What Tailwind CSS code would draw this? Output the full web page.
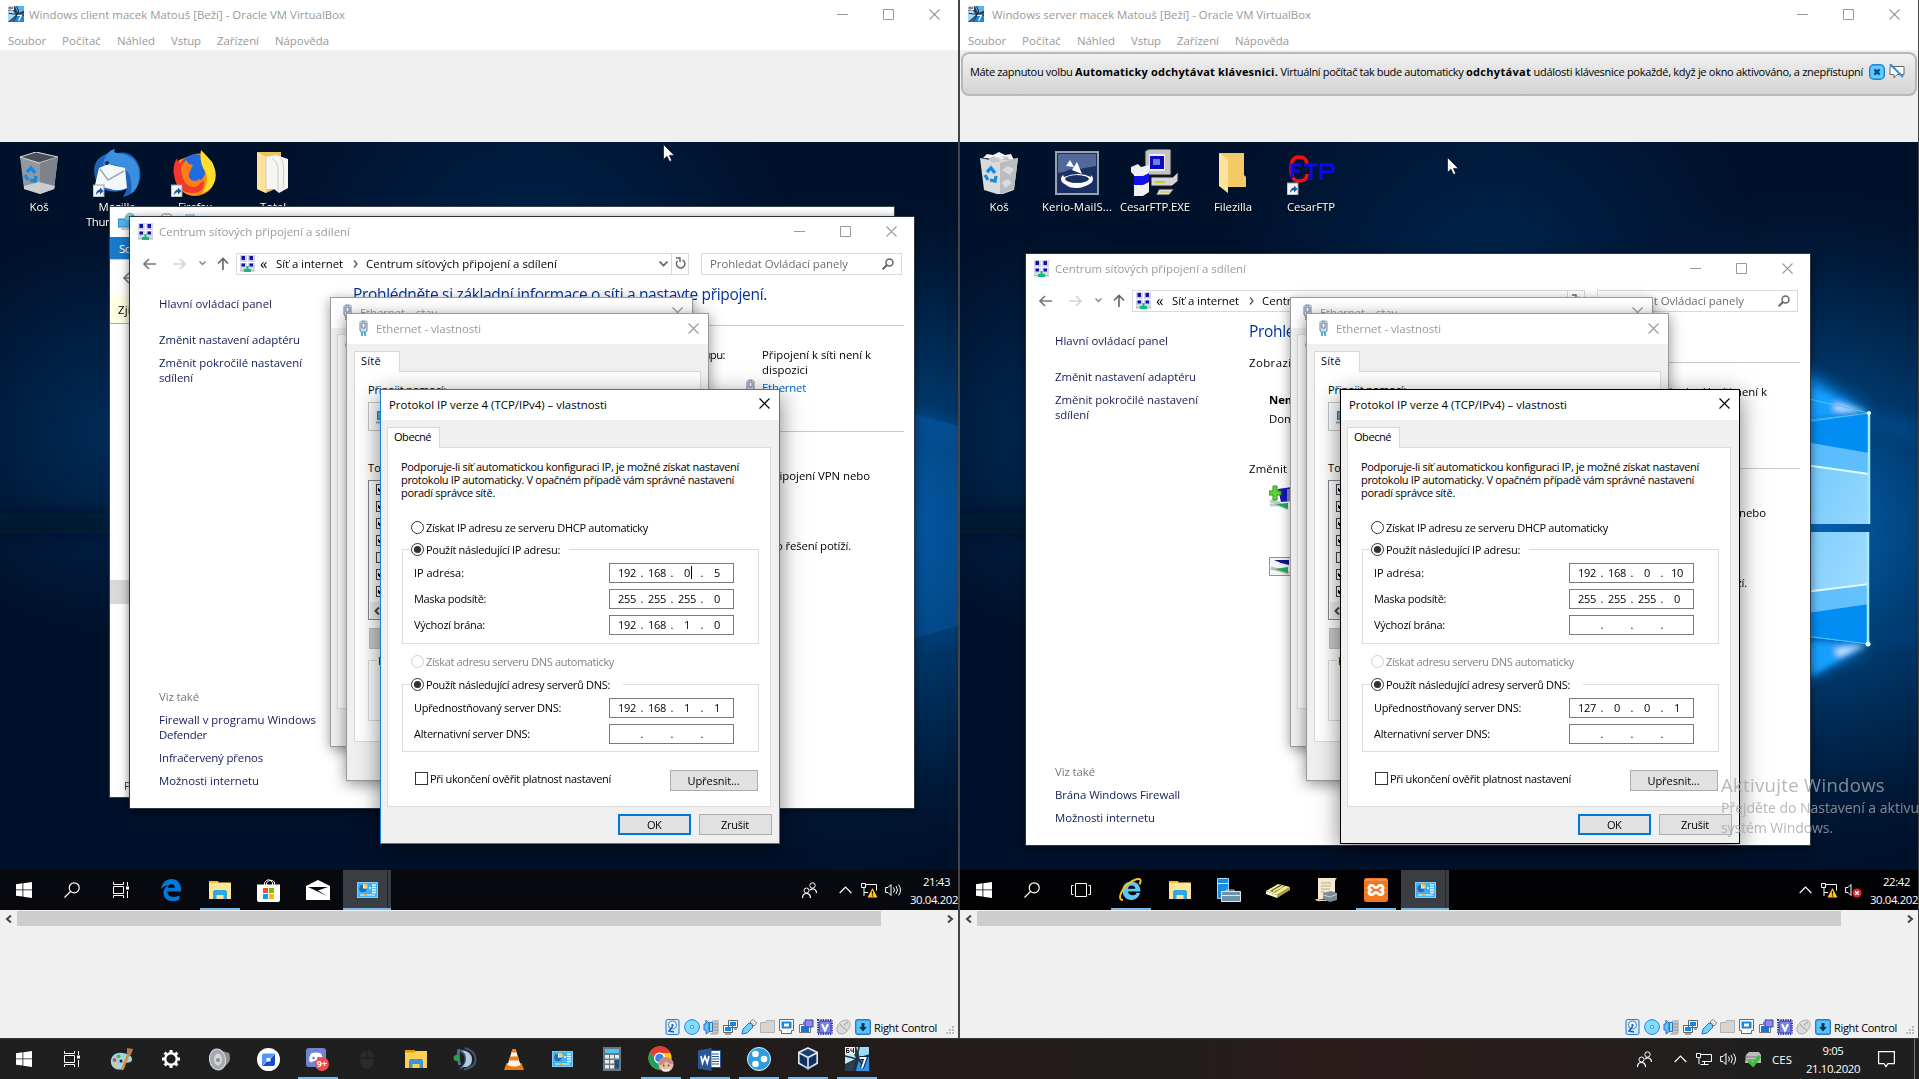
<!DOCTYPE html>
<html lang="cs">
<head>
<meta charset="utf-8">
<title>Windows client / server – Oracle VM VirtualBox</title>
<script src="https://cdn.jsdelivr.net/npm/@tailwindcss/browser@4"></script>
</head>
<body class="overflow-hidden bg-[#3a3a3c]">
<div id="root" class="flex h-[1079px] w-[1919px] flex-col overflow-hidden font-['Open_Sans','Noto_Sans',sans-serif] text-[11.4px] leading-[15px]"></div>
<script>
// Text with an optional target width; letter spacing is fitted after layout.
const t = (s, w, c = '') => `<span class="${c.includes('block') ? 'w-fit' : 'inline-block'} shrink-0 whitespace-pre ${c}"${w ? ` data-w="${w}"` : ''}>${s}</span>`;
const svg = (w, h, vb, body, c = '') => `<svg class="block shrink-0 ${c}" width="${w}" height="${h}" viewBox="${vb}" fill="none">${body}</svg>`;

const I = {
  vm: svg(16,16,'0 0 24 24','<rect width="24" height="24" fill="#2b3a4c"/><path d="M10 0h14v7l-9 4z" fill="#58b4ee"/><path d="M0 7l7-1 5 7-12 11z" fill="#a9dcf8"/><path d="M3 24l11-11 10-2v13z" fill="#1f86d8"/><path d="M13 0l3 9-8 15M1 11l23 3" stroke="#1d3144" stroke-width="1.500"/><rect width="9" height="6" fill="#eee"/><path d="M1.500 1.500h2v3h-2zM6 1v4M5 3h3" stroke="#333"/><path d="M14 14h6l-4 8" stroke="#fff" stroke-width="2"/>'),
  vmBig: svg(24,24,'0 0 24 24','<rect width="24" height="24" fill="#2a3440"/><path d="M11 0h13v9l-9 2z" fill="#9adcf8"/><path d="M0 7h9l3 4-12 6z" fill="#bfe9fb"/><path d="M0 18l12-6-3 12H0z" fill="#2c3f52"/><path d="M11 24l3-12 10-2v14z" fill="#2b93ec"/><path d="M14 0l-5 24M0 9l12 3 12-4M10 8l8 10" stroke="#1d3144" stroke-width="1.600"/><rect width="10" height="7" fill="#f4f4f4"/><path d="M4 1.500H1.500v4H4v-2H2M6 1.500v2.500h3M8.500 1v5" stroke="#222"/><path d="M14.500 11h6l-3.500 10" stroke="#123" stroke-width="4"/><path d="M14.500 11h6l-3.500 10" stroke="#fff" stroke-width="2"/>'),
  min: svg(11,11,'0 0 11 11','<path d="M0 5.500h11" stroke="currentColor"/>'),
  max: svg(11,11,'0 0 11 11','<path d="M.5.5h10v10H.5z" stroke="currentColor"/>'),
  x: svg(11,11,'0 0 11 11','<path d="M.5.5l10 10M10.500.5l-10 10" stroke="currentColor" stroke-width="1.100"/>'),
  net: svg(15,17,'0 0 15 17','<path d="M0 0h7v7H0zM8 0h7v7H8zM0 8h7v6H0zM8 8h7v6H8z" fill="#d5d5ea"/><path d="M1.500 1h3.500v4h-3.500zM9.500 1h3.500v4h-3.500zM1.500 8.500h3.500v3h-3.500zM9.500 8.500h3.500v3h-3.500z" fill="#1212a8"/><path d="M5 15.500H0M10 15.500h5" stroke="#bbb" stroke-width="2"/><path d="M6.500 11h2v3H11v3H4v-3h2.500z" fill="#16b877"/>'),
  plug: svg(9,17,'0 0 9 17','<path d="M1 2.500L2.500 1h4L8 2.500V11L6.500 12h-4L1 11z" fill="#cfdcea" stroke="#71849c"/><path d="M3 3h3v5H3z" fill="#fff" stroke="#5f7590" stroke-width=".9"/><path d="M3 12v4M6 12v4" stroke="#1aa3d8" stroke-width="1.600"/>'),
  back: svg(13,12,'0 0 13 12','<path d="M13 6H1.500M6 1L1 6l5 5" stroke="#777" stroke-width="1.600"/>'),
  fwd: svg(13,12,'0 0 13 12','<path d="M0 6h11.500M7 1l5 5-5 5" stroke="#d4d4d4" stroke-width="1.600"/>'),
  dn: svg(7,5,'0 0 7 5','<path d="M.5.5l3 3 3-3" stroke="#888" stroke-width="1.500"/>'),
  dn2: svg(9,6,'0 0 9 6','<path d="M.5.500l4 4 4-4" stroke="#666" stroke-width="1.700"/>'),
  up: svg(12,13,'0 0 12 13','<path d="M6 13V1.500M1 6.500L6 1.500l5 5" stroke="#666" stroke-width="1.600"/>'),
  ref: svg(11,13,'0 0 11 13','<path d="M7.500 3A4.200 4.200 0 1 1 2.500 4M1 1h4v4" stroke="#666" stroke-width="1.500"/>'),
  mag: svg(12,12,'0 0 12 12','<circle cx="7.500" cy="4.500" r="3.500" stroke="#666" stroke-width="1.500"/><path d="M5 7L.7 11.300" stroke="#666" stroke-width="2"/>'),
  win: svg(16,16,'0 0 16 16','<path d="M0 2.200l6.500-.9v6.200H0zM7.300 1.200L16 0v7.500H7.300zM0 8.300h6.500v6.300L0 13.700zM7.300 8.300H16V16l-8.700-1.200z" fill="#fff"/>'),
  search: svg(16,16,'0 0 16 16','<circle cx="10.200" cy="5.800" r="5" stroke="#fff" stroke-width="1.200"/><path d="M6.500 9.500L.5 15.500" stroke="#fff" stroke-width="1.300"/>'),
  tv: svg(17,16,'0 0 17 16','<path d="M.5 0v2.500h10V0M.5 4.500h10v7H.5zM.5 16v-2.500h10V16M14.500 0v4M14.500 9v7" stroke="#fff"/><path d="M13 4.500h3v3h-3z" fill="#fff"/>'),
  tv2: svg(20,14,'0 0 20 14','<path d="M4.500.5h11v13h-11zM2.500 2.500H.5v9h2M17.500 2.500h2v9h-2" stroke="#fff"/>'),
  edge: svg(20,22,'0 0 20 22','<path d="M0 10C1 4 5 0 10.500 0 17 0 20 5 20 10v2.500H6.500c0 6 7 6.500 12 4v4.300C11 24 2.500 22 2.500 13.500 2.500 10 5 7.500 7.500 6.500 4.500 6.500 2 7.500 0 10zM6.700 8.700h7.100c0-4.800-6.600-4.500-7.100 0z" fill="#0078d7"/>'),
  folder: svg(22,18,'0 0 22 18','<path d="M0 0h9l1 2h12v16H0z" fill="#f0c236"/><path d="M0 3.500V2l9 0 1 -.5H22V18H0z" fill="#ffe596"/><path d="M4 18v-7.500l1.500-1.500h11L18 10.500V18h-3.500v-4h-7v4z" fill="#2ea8e0"/>'),
  folder2: svg(22,18,'0 0 22 18','<path d="M0 0h10v4H0z" fill="#e59b0c"/><path d="M0 2.500h9l1.500-1.500H22v17H0z" fill="#ffcf56"/><path d="M4 18v-7.500L5.500 9h11l1.500 1.500V18h-3.500v-4h-7v4z" fill="#3d95de"/>'),
  store: svg(23,23,'0 0 23 23','<path d="M7.500 6V3.500Q11.500-2 15.500 3.500V6M9.500 6V4Q13-1 17.500 3V6" stroke="#fff"/><path d="M0 5.500h23V21q0 2-2 2H2q-2 0-2-2z" fill="#fff"/><path d="M6 9h5v5H6z" fill="#f25022"/><path d="M12 9h5v5h-5z" fill="#7fba00"/><path d="M6 15h5v5H6z" fill="#00a4ef"/><path d="M12 15h5v5h-5z" fill="#ffb900"/>'),
  mail: svg(24,20,'0 0 24 20','<path d="M0 6L12 0l12 6v14H0z" fill="#fff"/><path d="M2 7h20l-10 3.500L21 16 2 7z" fill="#08090d"/>'),
  cp: svg(21,16,'0 0 21 16','<path d="M0 0h21v16H0z" fill="#7ed0fb"/><path d="M1 1h19v14H1z" fill="#3db2f5"/><circle cx="6" cy="6.500" r="4" fill="#fff"/><path d="M6 2.500a4 4 0 1 0 4 4H6z" fill="#1b6fbd"/><path d="M7 1.500a4 4 0 0 1 4 4H7z" fill="#ffc24a"/><path d="M12 6h2M15 3h4M15 5.500h4M15 8h4M15 10.500h4" stroke="#e8f7ff" stroke-width="1.300"/><path d="M3 13h4M10 13h8" stroke="#fff"/><path d="M7 13h4" stroke="#ffb62e" stroke-width="1.500"/>'),
  people: svg(15,16,'0 0 15 16','<circle cx="10.500" cy="3.500" r="2.700" stroke="#fff"/><circle cx="4.500" cy="8.500" r="2.500" stroke="#fff"/><path d="M.5 16c0-6 8-6 8 0M8 8c3-2.500 6.500-.5 6.500 3" stroke="#fff" stroke-width="1.200"/>'),
  caret: svg(13,8,'0 0 13 8','<path d="M.7 7l5.800-5.800L12.300 7" stroke="#fff" stroke-width="1.200"/>'),
  eth: svg(16,14,'0 0 16 14','<path d="M5 2.500h10.500v7H6M3 5v7M8.500 10v2.500M4.500 12.500h8" stroke="#fff"/><path d="M.5 1.500h4v4h-4z" fill="#111" stroke="#fff"/>'),
  ethw: svg(17,15,'0 0 17 15','<path d="M5 1.500h10.500v6M3 5v8M3 9.500h4" stroke="#fff"/><path d="M.5.5h4v4h-4z" fill="#111" stroke="#fff"/><path d="M11.500 5l5 9.500h-10z" fill="#fcc419"/><path d="M11.500 8v3.500M11.500 12.300v1.200" stroke="#222" stroke-width="1.200"/>'),
  vol: svg(17,14,'0 0 17 14','<path d="M.6 4.500h2.400L6 1.500v11L3 9.500H.6z" stroke="#fff"/><path d="M8.500 4.500q2 2.500 0 5M11 3q3 4 0 8M13.500 1.500q4 5.500 0 11" stroke="#fff"/>'),
  volx: svg(17,15,'0 0 17 15','<path d="M.6 4.500h2.400L6 1.500v11L3 9.500H.6z" stroke="#fff"/><circle cx="12" cy="10" r="4.500" fill="#e0252f"/><path d="M10.200 8.200l3.600 3.600M13.800 8.200l-3.600 3.600" stroke="#fff" stroke-width="1.300"/>'),
  ie: svg(23,24,'0 0 23 24','<path d="M12 3.500c6 0 9.500 4 9.500 10H9c.3 4.500 7.500 5 8.500 1.600h3.700c-1.400 4.400-5 7-9 7-5 0-8.700-4-8.700-9.500S7 3.500 12 3.500zM9 10.800h7.300C16 6.500 9.500 6.500 9 10.800z" fill="#5cc8f5"/><path d="M4 22C-2 22 2 12 9 6c6-5 12-6.500 12.500-3.500.2 1.100-.2 2.500-1 4" stroke="#f5c21b" stroke-width="2"/>'),
  server: svg(24,24,'0 0 24 24','<path d="M.5.5h11v20H.5z" fill="#1b8be0" stroke="#9fd3f8"/><path d="M1 5.500h10" stroke="#d7eefc"/><path d="M9 14v-2h8v2" stroke="#c9d6de"/><path d="M4.500 13.500h19v10h-19z" fill="#6f93a8" stroke="#dce6ec"/><path d="M5 17.500h18" stroke="#dce6ec"/>'),
  books: svg(24,15,'0 0 24 15','<path d="M0 8L12 1l12 3-13 8z" fill="#f3ec9e"/><path d="M0 8l11 4v3L0 11z" fill="#fbf9dc"/><path d="M11 12l13-8v3l-13 8z" fill="#b2a63c"/><path d="M4 8l10-6 5 1-10 6.500z" fill="#5c5520"/><path d="M7 8.500L17 3" stroke="#e7dd83" stroke-width="2"/>'),
  scroll: svg(23,24,'0 0 23 24','<path d="M3 0h19q-2 1-2 4v17H3z" fill="#f3ead0"/><path d="M3 21H0q2 3 5 2h12" fill="#e0d2a8"/><path d="M6 5h10M6 8h10M6 11h9M6 14h4" stroke="#b5aa90"/><path d="M8 15l8-2 6 2v7l-7 2-7-3z" fill="#7e8b96"/><path d="M8 17l7 2 7-3" stroke="#c9d2d8"/>'),
  xampp: svg(24,24,'0 0 24 24','<rect width="24" height="24" rx="2.500" fill="#f37623"/><path d="M1 2h22" stroke="#f9ae78"/><path d="M8.500 7.500c-4-1-4.500 3-2 4.500-2.500 1.500-2 5.500 2 4.500 1.500-.5 1-2 3.500-2s2 1.500 3.500 2c4 1 4.500-3 2-4.500 2.500-1.500 2-5.500-2-4.500-1.500.5-1 2-3.500 2s-2-1.500-3.500-2z" stroke="#fff" stroke-width="2.800"/>'),
  paint: svg(24,24,'0 0 24 24','<path d="M12 6C5 5 0 10 1 16c1 7 10 8 13 5 2-2 0-4 2-5 3-1 6 0 6-4 0-3-4-5.500-10-6z" fill="#9ed4ec"/><circle cx="4.500" cy="13" r="1.900" fill="#e84a3a"/><circle cx="8.500" cy="9.300" r="1.900" fill="#4cb648"/><circle cx="5.500" cy="18" r="1.700" fill="#f5c83c"/><circle cx="11" cy="14" r="1.500" fill="#222"/><path d="M12 23l7-17" stroke="#e08a2c" stroke-width="2.500"/><path d="M17 1l6 1-2 6-4-1z" fill="#b87a49"/>'),
  gear: svg(20,20,'0 0 20 20','<circle cx="10" cy="10" r="5.800" stroke="#fff" stroke-width="2.400"/><path d="M10 1v3M10 16v3M1 10h3M16 10h3M3.600 3.600l2.200 2.200M14.200 14.200l2.200 2.200M16.400 3.600l-2.200 2.200M5.800 14.200l-2.200 2.200" stroke="#fff" stroke-width="3"/>'),
  spk: svg(22,23,'0 0 22 23','<path d="M10 2l10 3q2 6 0 9l-7 8z" fill="#8c8f95"/><ellipse cx="8.500" cy="11.500" rx="8" ry="10.500" fill="#a6aab0" stroke="#d9dce0" transform="rotate(-8 8.500 11.500)"/><ellipse cx="9" cy="11.500" rx="4" ry="6" fill="#d4d7dc"/><circle cx="9" cy="12" r="2" fill="#8c9096"/>'),
  blue: svg(23,23,'0 0 23 23','<circle cx="11.500" cy="11.500" r="11.500" fill="#fff"/><path d="M5 18V7.500q0-2 2-2h11l-4.500 4.500H9.500v3.500z" fill="#4c97f7"/><path d="M18 6v10q0 2-2 2H5.500l4.500-4.500h3.500v-3z" fill="#1a49c9"/>'),
  discord: svg(24,24,'0 0 24 24','<rect x="0" y="1" width="20" height="19" rx="3" fill="#7283cf"/><path d="M5 6.500q5-2 10 0 2 3 2 7.500l-3 1.500-1.200-1.500H7.200L6 15.500 3 14q0-4.500 2-7.500z" fill="#fff"/><circle cx="7.500" cy="11" r="1.300" fill="#7283cf"/><circle cx="12.500" cy="11" r="1.300" fill="#7283cf"/><circle cx="16" cy="17" r="7" fill="#ee4a4f"/><text x="10.800" y="20.300" font-size="9" font-weight="700" fill="#fff" font-family="Open Sans">9+</text>'),
  mouse: svg(14,19,'0 0 14 19','<rect x=".5" y=".5" width="13" height="18" rx="6" fill="#2b2b2b"/><path d="M7 0v8M0 8h14" stroke="#1c1c1c"/>'),
  ts: svg(24,24,'0 0 24 24','<path d="M7 3.500A10 10 0 0 1 7 21.500M12 1q10 3 10.500 11T11 22.500" stroke="#3d5878" stroke-width="2"/><path d="M8 3q11 1 11 9.500T9 20q4-3 4-8.500T8 3z" fill="#b4cbe0"/><path d="M6 2q-2 9 1 16" stroke="#4f6f91" stroke-width="3"/><circle cx="3.500" cy="11" r="3" fill="#2b9c4c"/>'),
  vlc: svg(20,22,'0 0 20 22','<path d="M2.500 15h15l2.500 7H0z" fill="#f07d0a"/><path d="M8.500 1h3l5 16q-6.500 3-13 0z" fill="#f6f6f4"/><path d="M8.300 1h3.400l1 3.500H7.300zM6 8.500h8l1.200 4H4.800z" fill="#ee7f16"/>'),
  calc: svg(18,24,'0 0 18 24','<path d="M0 0h18v24H0z" fill="#6d7680"/><path d="M2 2h14v4H2z" fill="#46c8f0"/><path d="M2 8h4v3.500H2zM7 8h4v3.500H7zM12 8h4v3.500h-4zM2 13h4v3.500H2zM7 13h4v3.500H7zM2 18h4v3.500H2zM7 18h4v3.500H7z" fill="#e4e8eb"/><path d="M12 13h4v8.500h-4z" fill="#1f4f80"/>'),
  chrome: svg(26,26,'0 0 26 26','<circle cx="12" cy="12" r="11.500" fill="#fbc916"/><path d="M2 6.300A11.500 11.500 0 0 1 22.500 7H12a5 5 0 0 0-4.500 7z" fill="#df3f33"/><path d="M2 6.300A11.500 11.500 0 0 0 11 23.500l5-9H8z" fill="#1fa15d"/><circle cx="11.500" cy="12" r="5.500" fill="#fff"/><circle cx="11.500" cy="12" r="4.300" fill="#3f7fe8"/><circle cx="18" cy="18.500" r="7.500" fill="#e9bda3"/><path d="M11 19q-1-7 7-8 7 1 7 7-4 1-7-3-2 4-7 4z" fill="#c98e7a"/><path d="M13.500 21q4 6 8.500 0l-1 4h-6z" fill="#f4efef"/><circle cx="15.700" cy="19.500" r=".9" fill="#6b3f4f"/><circle cx="20.500" cy="19.500" r=".9" fill="#6b3f4f"/>'),
  word: svg(23,23,'0 0 23 23','<path d="M11 2.500h11.500v17H11z" fill="#fff" stroke="#2b5797"/><path d="M14 6h7M14 8.500h7M14 11h7M14 13.500h7M14 16h7" stroke="#2b5797"/><path d="M0 2.500L13.500 0v23L0 20.500z" fill="#2b5797"/><path d="M3 8l1.500 7L7 8.500 9.200 15 11 8" stroke="#fff" stroke-width="1.700"/>'),
  hyper: svg(24,24,'0 0 24 24','<circle cx="12" cy="12" r="11.500" fill="#2d9edb" stroke="#e6f5fd"/><circle cx="8.500" cy="7" r="3.300" fill="#fff"/><circle cx="17" cy="12" r="3.300" fill="#fff"/><circle cx="8.500" cy="17" r="3.300" fill="#fff"/>'),
  vbox: svg(20,24,'0 0 20 24','<path d="M10 1l9.500 4.500v12L10 23 .5 17.500v-12z" fill="#12305c"/><path d="M10 1l9.500 4.500L10 10.500.5 5.500z" fill="#1d3f70" stroke="#dce9f6" stroke-width="1.600"/><path d="M.8 5.800v10.500L10 21.500v-11M19.200 5.800v10.500L10 21.500" stroke="#dce9f6" stroke-width="1.600"/><path d="M4 18l6 5 6-5-6 3z" fill="#9fb8d6"/>'),
  printer: svg(17,15,'0 0 17 15','<path d="M2 3l3-3h10l2 3v8H1z" fill="#b9bdc0"/><path d="M1 5h15M2 8h13" stroke="#777"/><path d="M5 9l4 4 7-9" stroke="#3bbf35" stroke-width="3.500"/>'),
  notif: svg(17,17,'0 0 17 17','<path d="M.6.6h15.800v12H10l-2 3-2-3H.6z" stroke="#fff" stroke-width="1.200"/>'),
};

// VirtualBox status bar devices
const S = [
 '<rect x="1" y=".5" width="13" height="15" rx="1.500" fill="#cfeaff" stroke="#2c74cf"/><circle cx="7.500" cy="6" r="4" fill="#fff" stroke="#3f84cc"/><circle cx="7.500" cy="6" r="1.300" fill="#2c74cf"/><path d="M8 7l-4 5 5 1" stroke="#1a5fb4" stroke-width="1.500"/>',
 '<circle cx="8" cy="8" r="7.400" fill="#7fdcff" stroke="#2f86d8"/><circle cx="8" cy="8" r="2" fill="#3f9be0"/><circle cx="8" cy="8" r=".9" fill="#fff"/>',
 '<path d="M10 2h5v12h-5zM7 15h7" stroke="#b5b5b5" fill="#ccc" stroke-width="1.500"/><path d="M11 5h4M11 8h4M11 11h4" stroke="#888"/><path d="M1 5h2V1l3 3v9l-3 2v-4H1z" fill="#5fc5ff" stroke="#2672c7"/><path d="M6.500 3.500h3v9h-3z" fill="#9be0ff" stroke="#2672c7"/>',
 '<path d="M6.500 1.500h9v7h-9zM1.500 6.500h9v7h-9z" fill="#fff" stroke="#666"/><path d="M8 3h6v4H8zM3 8h6v4H3z" fill="#0f8ae8"/><path d="M3 15h6M12 10h3" stroke="#888" stroke-width="1.500"/>',
 '<path d="M1 15l1-5 6-6q4 0 4 4l-6 6z" fill="#6fd0ff" stroke="#2672c7"/><path d="M9 3l3-2.500L15.500 4 13 7z" fill="#fff" stroke="#777"/><path d="M11.500 3.500l1 1" stroke="#555"/>',
 '<path d="M.5 3.500h5l1-2h8v12H.5z" fill="#d4d4d4" stroke="#b3b3b3"/>',
 '<path d="M.5.5h14v11h-2v3h-10v-3h-2z" fill="#fff" stroke="#666"/><path d="M2.500 2.500h10v7h-10z" fill="#0f8ae8"/><path d="M5 4.500h5v3H5z" fill="#fff"/>',
 '<path d="M1.500 5.500h11v8h-11z" fill="#fff" stroke="#777"/><path d="M3 7h8v6H3z" fill="#0f79d8"/><path d="M7 1h8v7H7z" fill="#8b8ce8" stroke="#3f3fa8"/><path d="M5 3h2v3H5z" fill="#6a6bd8"/>',
 '<path d="M1 1h14v14H1z" stroke="#3036a0" stroke-dasharray="1.200 1.200" stroke-width="2"/><rect x="2" y="2" width="12" height="12" rx="1.500" fill="#7a82e0" stroke="#3036a0"/><path d="M5 5l3 6.500L11 5" stroke="#fff" stroke-width="2"/>',
 '<path d="M1 9q2-8 10-8 4 1 3 6-3 8-9 8-5-1-4-6z" fill="#dcdcdc" stroke="#aaa"/><path d="M4 5q2 4 7 6M8 6l4-3" stroke="#999"/>',
 '<rect x=".7" y=".7" width="14.600" height="14.600" rx="2" fill="#58c4fa" stroke="#2b7bd0" stroke-width="1.400"/><path d="M6.500 4h3v4H12l-4 4.500L4 8h2.500z" fill="#0b2f5e"/>'
].map(b => svg(16,16,'0 0 16 16',b)).join('');

// Desktop shortcuts
const arrow = '<rect x="0" y="36" width="11" height="12" fill="#f4f6f8" stroke="#99a"/><path d="M3 46q0-5 4-5.500V38.500l3.500 3.500-3.500 3.500v-2.500Q5 43 3 46z" fill="#1e5799"/>';
const D = {
  bin: svg(38,42,'0 0 38 42','<path d="M0 5L16 0l22 5-4 32-14 5-16-5z" fill="#9298a0"/><path d="M0 5l19 6L38 5 16 0z" fill="#4a5058" stroke="#d8dcdf"/><path d="M20 11l18-6-4 32-14 5z" fill="#7d838b"/><path d="M4 34l15-4 16 4-1 3-14 5-16-5z" fill="#d5d8da" opacity=".85"/><path d="M7 20l4-4 4 5M16 24l-1 5-5-1M8 28l-3-5" stroke="#1a86dc" stroke-width="3.200"/>'),
  binFull: svg(38,42,'0 0 38 42','<path d="M3 6l4-4 6 1 6-3 6 3 6-1 3 6z" fill="#f4f4f4"/><path d="M0 6l10 2 8-3 8 3 12-2-4 32-14 5-16-5z" fill="#d8dadc"/><path d="M20 11l18-5-4 31-14 5z" fill="#b9bdc1"/><path d="M22 18l6-4 6 3-4 6zM22 30l6-3 4 4-7 5z" fill="#d9dbdd"/><path d="M8 7l6-3 7 5-8 2zM22 4l7 1-3 4z" fill="#c4c8cc"/><path d="M7 20l4-4 4 5M16 24l-1 5-5-1M8 28l-3-5" stroke="#1a86dc" stroke-width="3.200"/>'),
  tb: svg(48,48,'0 0 48 48','<path d="M2 28C-3 8 15 2 24 4 40 0 50 16 47 30c-2 10-10 17-17 18l4-8C20 46 4 42 2 28z" fill="#1f62b8"/><path d="M10 16Q12 2 22 0q-2 4 2 4 24 2 22 26-1 10-8 15 2-20-6-24-8-8-22-5z" fill="#3a8fe0"/><path d="M6 19l9-4 17 4 2 20q-9 4-17 1L2 36z" fill="#f3f6fa"/><path d="M7 20l8 11 16-9" stroke="#9fabb8" stroke-width="1.500"/><circle cx="14" cy="14" r="2" fill="#0f2f63"/>'+arrow),
  ff: svg(48,48,'-2 -1 48 48','<path d="M22 4q10-2 13 6 5 2 6 10 3 18-10 24Q16 50 6 38-2 26 6 10z" fill="#ff8a16"/><path d="M4 8q0 4 3 5 4-6 12-6l2 4-4 8q-6 6 0 12 8 6 14-1 1 12-10 13Q9 44 4 34-3 20 4 8z" fill="#f3382c"/><path d="M10 10Q20 1 30 6l2 18q-4 10-12 8-8-5-2-13l-5-1z" fill="#1f6de0"/><path d="M28 0q6 6 11 12 8 15-1 26-4 4-9 5 8-12 3-22-6-8-4-21z" fill="#ffdf2b"/><path d="M8 16l5-6 3 4 4 1-3 6q-4 8 4 10 4 0 6-2 2 6-5 8Q9 38 8 16z" fill="#ff7d15"/>'+'<g transform="translate(-2,-1)">'+arrow+'</g>'),
  docs: svg(32,42,'0 0 32 42','<path d="M0 0h24v6l-4 30-11 5L0 37z" fill="#eec35f"/><path d="M0 0l9 5v36L0 37z" fill="#ffe29a"/><path d="M9 5l10-2 12 4v29l-9 5-5-4H9z" fill="#f6f6f4"/><path d="M15 6q6 4 6 10v24M24 6q4 6 2 30M9 6v30" stroke="#c9cac8"/>'),
  kerio: svg(44,44,'0 0 44 44','<path d="M1 1h42v42H1z" fill="#1a3064" stroke="#9aa3ac" stroke-width="2"/><path d="M3 3h38v12L3 22z" fill="#51699a"/><ellipse cx="22" cy="28" rx="14" ry="6" stroke="#fff" stroke-width="4"/><path d="M8 24q2-6 12-6h6l10 4v4q-12-6-27 0z" fill="#1c3267"/><path d="M8 28q2 10 15 9 14-2 14-11-5 8-15 7-10 0-14-5z" fill="#fff"/><path d="M15 9l4 7-8-1zM22 11l5 12-10-4z" fill="#fff"/>'),
  exe: svg(48,48,'0 0 48 48','<path d="M14 2l4-2h22v26H14z" fill="#c3c3c3" stroke="#222"/><path d="M18 5h16v17H18z" fill="#eee"/><path d="M19 7h14v13H19z" fill="#0a0ac8"/><path d="M22 10h7v6h-7z" fill="#6d7fd8"/><path d="M20 28h22l5-5v9l-6 5H20z" fill="#d5d5d5" stroke="#222"/><path d="M24 33h10" stroke="#c9c920" stroke-width="2"/><path d="M0 18l7-3 3 3 8-2v27l-6 4H3V26l-3-3z" fill="#f1f1f1"/><path d="M3 27h9l6-3v9l-6 3H3z" fill="#1111e8"/><path d="M28 40h15l-5 6H25z" fill="#ddd" stroke="#222"/><path d="M29 43h10" stroke="#c9c920"/>'),
  fold: svg(28,40,'0 0 28 40','<path d="M0 0h25v22l2 2v10H8z" fill="#f3ca66"/><path d="M0 0l9 6v34L0 33z" fill="#ffe39c"/>'),
  ftp: svg(48,44,'0 4 48 44','<path d="M20 18Q20 10 12 10 4 10 4 21.500 4 34 12 34q8 0 8-7" stroke="#f01010" stroke-width="3.500"/><path d="M5 31V18h9M5 24h8M17 18h14M24 18v15M34 33V18h9q3 0 3 3.500T43 25h-9" stroke="#0a0af0" stroke-width="3"/>'+arrow),
};

const wall = id => `<svg class="absolute inset-0" width="958" height="768" viewBox="0 0 958 768" preserveAspectRatio="none">
<defs>
<radialGradient id="g${id}" gradientUnits="userSpaceOnUse" cx="850" cy="385" r="340"><stop offset="0" stop-color="#0762b4"/><stop offset=".32" stop-color="#00437c"/><stop offset=".7" stop-color="#00254c" stop-opacity=".8"/><stop offset="1" stop-color="#001a38" stop-opacity="0"/></radialGradient>
<radialGradient id="h${id}" gradientUnits="userSpaceOnUse" cx="110" cy="290" r="200"><stop offset="0" stop-color="#002b57"/><stop offset="1" stop-color="#002b57" stop-opacity="0"/></radialGradient>
<radialGradient id="k${id}" gradientUnits="userSpaceOnUse" cx="530" cy="140" r="270"><stop offset="0" stop-color="#00244c"/><stop offset="1" stop-color="#002450" stop-opacity="0"/></radialGradient>
<linearGradient id="p${id}" x1="0" y1="0" x2="1" y2="1"><stop offset="0" stop-color="#5cc0fc"/><stop offset="1" stop-color="#a8dfff"/></linearGradient>
<filter id="b${id}" x="-50%" y="-50%" width="200%" height="200%"><feGaussianBlur stdDeviation="8"/></filter>
<filter id="c${id}" x="-50%" y="-50%" width="200%" height="200%"><feGaussianBlur stdDeviation="3"/></filter></defs>
<rect width="958" height="768" fill="#00112b"/>
<rect width="958" height="768" fill="url(#h${id})"/><rect width="958" height="768" fill="url(#k${id})"/><rect width="958" height="768" fill="url(#g${id})"/>
<g filter="url(#b${id})"><path d="M0 372h110v20H0z" fill="#000f22" opacity=".6"/><path d="M909 270l49 12v18l-49-18zM909 500l49-12v8z" fill="#0a62b4" opacity=".4"/></g>
${id === 'r' ? `<g filter="url(#b${id})"><path d="M820 215l88 56-88 20zM820 495l88 8-88 44z" fill="#0a96ff"/></g>
<g filter="url(#c${id})"><path d="M851 246l57 24-57 6zM851 500l57 2-57 32z" fill="#16a0ff"/><path d="M875 262l34 9-34-3zM875 508l34-6-30 12z" fill="#e4f6ff"/></g>
<path d="M800 283l109-12v111H800zM800 390h109v112l-109-12z" fill="url(#p${id})"/>
<path d="M845 299l64 12v21l-64-10zM845 450l64-9v21l-64 10z" fill="#4fb8fb" opacity=".75"/>
<path d="M800 284l109-13v40l-109-19zM800 490v-12l109-16v40z" fill="#018df2"/>
<path d="M845 323l64 9M845 450l64-8" stroke="#e4fbff" stroke-width="2"/>
<path d="M845 256l64 15M845 280l64-9M845 494l64 8" stroke="#4cc4ff"/>
<path d="M909 270v112M908 390v112" stroke="#a5eaff" stroke-width="2.500"/>
<circle cx="909" cy="271" r="2" fill="#e8fbff"/><circle cx="908" cy="502" r="2.500" fill="#e8fbff"/>` : `<path d="M915 272l43 12v200l-43 12z" fill="#0a62b8" opacity=".35"/>`}
</svg>`;

const controls = c => `<div class="ml-auto flex items-center gap-[35px] ${c}">${I.min}${I.max}${I.x}</div>`;
const link = (s, w, c = '') => `<div class="h-[15px] ${c}">${t(s, w, 'text-[#151c55]')}</div>`;

const center = v => `<section class="absolute ${v.r ? 'left-[65px] top-[111px]' : 'left-[129px] top-[74px]'} flex h-[593px] w-[786px] flex-col border border-[#2c3640] bg-white shadow-[0_2px_9px_rgba(0,0,0,.5)]">
 <header class="flex h-[29px] items-center pl-2 pr-[17px] text-[#999]">${I.net}<span class="w-[6px]"></span>${t('Centrum síťových připojení a sdílení', 191)}${controls('')}</header>
 <div class="flex h-[34px] items-center pl-[13px] pr-[12px] pt-px">
  ${I.back}<span class="w-[17px]"></span>${I.fwd}<span class="w-[13px]"></span>${I.dn}<span class="w-[11px]"></span>${I.up}
  <div class="ml-[7px] flex h-[22px] w-[453px] items-center border border-[#d9d9d9] pl-[3px]">${I.net}<span class="w-[5px]"></span>${t('«', 9, 'text-[15px]')}<span class="w-[7px]"></span>${t('Síť a internet', 67)}<span class="ml-[10px]">${svg(5,8,'0 0 5 8','<path d="M1 .5L4 4 1 7.500" stroke="#555" stroke-width="1.300"/>')}</span><span class="w-[8px]"></span>${t('Centrum síťových připojení a sdílení', 191)}
   <span class="ml-auto mr-[3px]">${I.dn2}</span><span class="flex h-full w-[17px] items-center justify-center border-l border-[#d9d9d9]">${I.ref}</span></div>
  <div class="ml-3 flex h-[22px] flex-1 items-center justify-between border border-[#d9d9d9] pl-2 pr-[7px] text-[#6d6d6d]">${t('Prohledat Ovládací panely', 138)}${I.mag}</div>
 </div>
 <div class="flex flex-1">
  <nav class="flex w-[223px] flex-col justify-between pb-[20px] pl-[29px] pt-4">
   <div>${link('Hlavní ovládací panel', 113)}${link('Změnit nastavení adaptéru', 141, 'mt-[21px]')}${link('Změnit pokročilé nastavení', 143, 'mt-2')}${link('sdílení', 34)}</div>
   <div>${t('Viz také', 40, 'block text-[#777]')}${v.r ? link('Brána Windows Firewall', 125, 'mt-2') : link('Firewall v programu Windows', 157, 'mt-2') + link('Defender', 48) + link('Infračervený přenos', 104, 'mt-2')}${link('Možnosti internetu', 100, 'mt-2')}</div>
  </nav>
  <main class="flex-1 pr-[10px] pt-1">
   <h1 class="h-5 text-[15.5px] leading-[20px] text-[#003399]">${t('Prohlédněte si základní informace o síti a nastavte připojení.', 414)}</h1>
   <div class="mt-[13px] flex h-4 items-center gap-2">${t('Zobrazit aktivní sítě', 112)}<i class="h-px flex-1 bg-[#c8c8c8]"></i></div>
   <div class="mt-[14px] flex h-[76px]">
    <div class="w-[310px] pl-5 pt-2">${t('Nem', 27, 'block font-bold')}${t('Doménová síť', 72, 'mt-[4px]')}</div>
    <div class="w-[99px]">${t('Typ přístupu:', 62)}</div>
    <div class="relative">${t('Připojení k síti není k', 109, 'block')}${t('dispozici', 46, 'block')}${t('Ethernet', 44, 'mt-[3px] block text-[#0066cc]')}<span class="absolute -left-4 top-[32px]">${I.plug}</span></div>
   </div>
   <div class="flex h-4 items-center gap-2">${t('Změnit nastavení sítě', 116)}<i class="mt-px h-px flex-1 bg-[#c8c8c8]"></i></div>
   <div class="flex h-[70px] justify-between pl-5 pr-[34px] pt-[9px]">${svg(32,26,'0 0 32 26','<path d="M9 4l14-2v14l-11 1z" fill="#1717b4"/><path d="M18 4h8v12h-8z" fill="#7c86e6"/><path d="M1 16l10 2M1 20h10l8 4" stroke="#c3c9cc" stroke-width="3"/><path d="M6 19l13-1v6z" fill="#18b15e"/><path d="M0 6h4V1h4v5h4v4H8v5H4v-5H0z" fill="#5fd536" stroke="#2a941a"/>')}<span class="pt-[20px]">${t('připojení VPN nebo', 102)}</span></div>
   <div class="flex h-[70px] justify-between pl-5 pr-[53px] pt-[11px]">${svg(32,20,'0 0 32 20','<path d="M.5.5h31v18H.5z" fill="#f5f6f8" stroke="#8a949c"/><path d="M5 3h15v5l-8-2z" fill="#10108e"/><path d="M2 11l8 2 10 3" stroke="#bbb" stroke-width="3"/><path d="M6 12l13-2v6z" fill="#18b15e"/>')}<span class="pt-[18px]">${t('o řešení potíží.', 75)}</span></div>
  </main>
 </div>
</section>`;

const explorer = `<section class="absolute left-[109px] top-[64px] flex h-[592px] w-[786px] flex-col border border-[#39434b] bg-white">
 <header class="flex h-[30px] items-start gap-3 pl-2 pt-[6px] text-[#999]">${svg(20,18,'0 0 20 18','<path d="M0 6h14v8H0z" fill="#4fb6ee" stroke="#2b80b8"/><path d="M3 16h8" stroke="#999"/><circle cx="12" cy="5" r="5" fill="#58b5d9"/><path d="M9 3l5-2M8 6l8-1" stroke="#c3ecd2"/>')}${svg(60,10,'0 0 60 10','<path d="M-3 2v7M13 1h7l3 3v6M12 10V1" stroke="#888"/><path d="M35 1h10v8H35z" fill="#b9cbe4"/><path d="M57 3v6" stroke="#888"/>')}<div class="ml-auto flex gap-[35px] pr-[17px] pt-[4px]">${I.min}${I.max}${I.x}</div></header>
 <div class="h-[23px] border-b border-[#ccc]"><div class="flex h-full w-[56px] items-center bg-[#1979ca] pl-[9px] text-white">${t('Soubor', 36)}</div></div>
 <div class="flex h-[36px] items-center pl-[13px]">${I.back}</div>
 <div class="flex h-[28px] items-center border-b border-[#aaa] bg-[#ffffe1] pl-2">${t('Zjišťování sítě', 74)}</div>
 <div class="mt-[256px] h-6 bg-[#d9d9d9]"></div>
 <div class="mt-auto pb-[4px] pl-[14px] text-[#4a2a70]">${t('Počet položek: 1', 90)}</div>
</section>`;

const dlgTitle = (s, w) => `<header class="flex h-[30px] items-center bg-white pl-3 pr-[9px] pb-px text-[#999]">${I.plug}<span class="w-2"></span>${t(s, w)}<span class="ml-auto">${I.x}</span></header>`;

const status = `<section class="absolute left-[330px] top-[155px] flex h-[450px] w-[363px] flex-col border border-[#9a9a9a] bg-[#f0f0f0] shadow-[0_3px_12px_rgba(0,0,0,.4)]">
 ${dlgTitle('Ethernet – stav', 77)}
 <div class="m-[6px] mb-[37px] flex-1 border border-[#dcdcdc] bg-white pl-[7px] pt-[2px]">${t('Obecné', 37)}</div>
</section>`;

const checks = [1,1,1,1,0,1,1].map(c => `<span class="block h-[11px] w-[11px] border border-[#444] bg-white">${c ? svg(9,9,'0 0 9 9','<path d="M1.500 3v3M2.500 4v3M3.500 5v3M4.500 4v3M5.500 3v3M6.500 2v3" stroke="#000"/>') : ''}</span>`).join('');
const props = `<section class="absolute left-[346px] top-[171px] flex h-[468px] w-[363px] flex-col border border-[#9a9a9a] bg-[#f0f0f0] shadow-[0_3px_14px_rgba(0,0,0,.45)]">
 ${dlgTitle('Ethernet - vlastnosti', 105)}
 <div class="flex flex-1 flex-col px-[7px] pb-[38px] pt-[7px]">
  <div class="z-10 -mb-px flex h-[21px] w-[46px] items-center border border-b-0 border-[#d9d9d9] bg-white pb-[3px] pl-[6px] text-[11px]">${t('Sítě', 20)}</div>
  <div class="flex-1 border border-[#d9d9d9] bg-white pl-[13px] pr-[13px] pt-[10px] text-[11px]">
   <div class="h-4">${t('Připojit pomocí:', 78)}</div>
   <div class="mt-1 flex h-[29px] items-center border border-[#c4c4c4] pl-[7px]">${svg(16,16,'0 0 16 16','<path d="M1.500 2.500h13v8h-13z" fill="#5ab8ee" stroke="#2a7fb5"/><path d="M0 13.500h16" stroke="#aaa" stroke-width="2"/>')}</div>
   <div class="mt-[29px] h-4">${t('Tohle připojení používá následující položky:', 230)}</div>
   <div class="mt-1 flex h-[140px] flex-col border border-[#828790] pl-[7px] pt-[3px]"><div class="flex flex-col gap-[6px]">${checks}</div><div class="-ml-[6px] mt-auto flex h-[17px] items-center bg-[#efefef] pl-1">${svg(6,8,'0 0 6 8','<path d="M5 .5L1.500 4 5 7.500" stroke="#444" stroke-width="2"/>')}</div></div>
   <div class="ml-px mt-2 h-[21px] w-24 border border-[#bfbfbf] bg-[#ccc]"></div>
   <div class="mt-[11px] h-[61px] border border-[#dcdcdc]"><span class="relative -top-2 ml-2 inline-block bg-white pl-px">${t('Popis', 28)}</span></div>
  </div>
 </div>
</section>`;

const radio = (on, dis) => svg(13,13,'0 0 13 13', `<circle cx="6.500" cy="6.500" r="6" fill="#fff" stroke="${dis ? '#ccc' : '#333'}"/>${on ? '<circle cx="6.500" cy="6.500" r="3.600" fill="#333"/>' : ''}`);
const field = (o, cur) => `<div class="flex h-5 w-[125px] items-center border border-[#7a7a7a] bg-white pb-px pl-[5px]">${o.map((n, i) => `<span class="relative flex w-6 justify-center">${n ? t(n, n.length * 6) : ''}${cur && i === 2 ? '<i class="absolute right-[7px] top-0 h-[13px] w-px bg-black"></i>' : ''}</span>${i < 3 ? '<span class="w-[6px] text-center">.</span>' : ''}`).join('')}</div>`;
const frow = (l, w, o, cur) => `<div class="flex h-5 items-center pl-[11px]"><span class="w-[195px] pb-px">${t(l, w)}</span>${field(o, cur)}</div>`;
const E = ['', '', '', ''];
const btn = (s, w, c) => `<button class="flex h-[21px] items-center justify-center bg-[#e1e1e1] pr-px ${c}">${t(s, w)}</button>`;

const dialog = v => `<section class="absolute left-[380px] top-[247px] flex h-[455px] w-[400px] flex-col border ${v.r ? 'border-black' : 'border-[#1883d7]'} bg-[#f0f0f0] shadow-[0_6px_22px_rgba(0,0,0,.5)]">
 <header class="flex h-[30px] items-center bg-white pb-px pl-2 pr-[9px]">${t('Protokol IP verze 4 (TCP/IPv4) – vlastnosti', 218)}<span class="ml-auto -mt-[2px]">${I.x}</span></header>
 <div class="px-[6px] pt-[7px] text-[11px] leading-[13px]">
  <div class="relative z-10 -mb-px flex h-[21px] w-[53px] items-center border border-b-0 border-[#d9d9d9] bg-white pb-[3px] pl-[6px]">${t('Obecné', 37)}</div>
  <div class="flex h-[360px] w-[384px] flex-col border border-[#dcdcdc] bg-white">
   <p class="mb-[20px] ml-[13px] mt-[12px] h-[40px]">${t('Podporuje-li síť automatickou konfiguraci IP, je možné získat nastavení', 338, 'block')}${t('protokolu IP automaticky. V opačném případě vám správné nastavení', 333, 'block')}${t('poradí správce sítě.', 94, 'block')}</p>
   <label class="ml-[23px] flex h-[15px] items-center gap-[2px]">${radio()}${t('Získat IP adresu ze serveru DHCP automaticky', 222, 'pb-px')}</label>
   <div class="ml-[14px] mt-[14px] h-[95px] w-[357px] border border-[#dcdcdc]">
    <label class="-mt-[9px] ml-2 flex h-4 w-[158px] items-center gap-[2px] bg-white">${radio(1)}${t('Použít následující IP adresu:', 134)}</label>
    <div class="mt-[6px] flex flex-col gap-[6px]">${frow('IP adresa:', 50, v.ip, !v.r)}${frow('Maska podsítě:', 72, ['255','255','255','0'])}${frow('Výchozí brána:', 71, v.gw)}</div>
   </div>
   <label class="ml-[23px] mt-[10px] flex h-[15px] items-center gap-[2px] text-[#838383]">${radio(0,1)}${t('Získat adresu serveru DNS automaticky', 188, 'pb-px')}</label>
   <div class="ml-[14px] mt-[15px] h-[68px] w-[357px] border border-[#dcdcdc]">
    <label class="-mt-[9px] ml-2 flex h-4 w-[212px] items-center gap-[2px] bg-white">${radio(1)}${t('Použít následující adresy serverů DNS:', 184)}</label>
    <div class="mt-[6px] flex flex-col gap-[6px]">${frow('Upřednostňovaný server DNS:', 147, v.dns)}${frow('Alternativní server DNS:', 116, E)}</div>
   </div>
   <div class="ml-[27px] mt-[18px] flex h-[21px] items-center pr-[12px]"><span class="-mt-1 mr-[2px] h-[13px] w-[13px] border border-[#333]"></span><span class="-mt-[5px]">${t('Při ukončení ověřit platnost nastavení', 181)}</span><span class="ml-auto">${btn('Upřesnit...', 52, 'w-[88px] border border-[#adadad]')}</span></div>
  </div>
  <div class="mt-[7px] flex justify-end gap-2 pr-px">${btn('OK', 14, 'w-[73px] border-2 border-[#0078d7]')}${btn('Zrušit', 28, 'w-[73px] border border-[#adadad]')}</div>
 </div>
</section>`;

const sc = (icon, ...l) => `<div class="flex w-[78px] flex-col items-center"><div class="flex h-[49px] items-center justify-center">${icon}</div><div class="mt-[2px] flex flex-col items-center text-white [text-shadow:0_1px_2px_#000]">${l.map(x => t(x[0], x[1])).join('')}</div></div>`;
const cell = (icon, c = '') => `<div class="flex h-full w-[49px] shrink-0 items-center justify-center ${c}">${icon}</div>`;
const uc = icon => `<div class="flex h-full w-[49px] shrink-0 flex-col items-center"><div class="flex flex-1 items-center">${icon}</div><i class="-mt-[2px] h-[2px] w-10 bg-[#76b9ed]"></i></div>`;
const act = `<div class="ml-px flex h-full w-[48px] shrink-0 border-b-2 border-[#76b9ed] bg-[#3a3d42]"><div class="flex w-[45px] items-center justify-center border-r border-[#25272a] pt-[2px] pl-[5px]">${I.cp}</div></div>`;

const cursor = c => `<span class="absolute ${c}">${svg(12,18,'0 0 12 18','<path d="M.5.500v15l3.500-3.300 2.500 5.300 2.300-1L6.400 11.400h4.900z" fill="#fff" stroke="#111" stroke-width=".7"/>')}</span>`;

const vm = v => `<div class="flex h-[1038px] w-[958px] flex-col overflow-hidden bg-[#f0f0f0]">
 <header class="flex h-7 items-center bg-white pl-2 pr-[18px] text-[#999]">${I.vm}<span class="${v.r ? 'w-[8px]' : 'w-[5px]'}"></span>${t(v.title, v.tw)}${controls('')}</header>
 <nav class="flex h-[22px] items-center bg-white pl-2 pb-0 text-[#999]"><div class="flex gap-4 pt-[3px]">${t('Soubor', 38)}${t('Počítač', 39)}${t('Náhled', 38)}${t('Vstup', 30)}${t('Zařízení', 42)}${t('Nápověda', 54)}</div></nav>
 <div class="h-[92px] px-px pt-[2px]">${v.r ? `<div class="flex h-[44px] items-center rounded-lg border-2 border-[#b8b8b8] bg-gradient-to-b from-[#f0f0f0] to-[#d4d4d4] pb-[5px] pl-[7px] pr-[10px] text-[11px]"><span class="flex whitespace-pre">${t('Máte zapnutou volbu ', 105)}${t('Automaticky odchytávat klávesnici.', 203, 'font-bold')}${t(' Virtuální počítač tak bude automaticky ', 188)}${t('odchytávat', 65, 'font-bold')}${t(' události klávesnice pokaždé, když je okno aktivováno, a znepřístupní', 332)}</span><span class="ml-auto flex gap-1">${svg(16,16,'0 0 15 15','<rect x=".7" y=".7" width="13.600" height="13.600" rx="4" fill="#5fd0fb" stroke="#2380d8" stroke-width="1.400"/><path d="M5 5l5 5M10 5l-5 5" stroke="#0d4b9c" stroke-width="2.400"/>')}${svg(16,15,'0 0 16 15','<path d="M1 2.500h14v8h-7l-3 3.500v-3.500H1z" fill="#fff" stroke="#666"/><path d="M1 0l13 13" stroke="#2390e8" stroke-width="2"/>')}</span></div>` : ''}</div>
 <div class="relative flex h-[768px] flex-col overflow-hidden">
  ${wall(v.r ? 'r' : 'l')}
  <div class="relative flex h-[728px] pt-[6px]">${v.icons}
  ${v.r ? '' : explorer}${center(v)}${status}${props}${dialog(v)}
  ${v.r ? `${cursor('left-[487px] top-[15px]')}<div class="pointer-events-none absolute left-[761px] top-[630px] w-[200px] text-[#a0a6ac]/80">${t('Aktivujte Windows', 164, 'block text-[18.5px] leading-[26px]')}${t('Přejděte do Nastavení a aktivu', 198, 'block text-[14px] leading-[20px]')}${t('systém Windows.', 112, 'block text-[14px] leading-[20px]')}</div>` : cursor('left-[663px] top-[2px]')}
  </div>
  <footer class="relative flex h-10 items-center ${v.r ? 'bg-[#020205]' : 'bg-[#07090f]'}">
   ${v.bar}
   <div class="ml-auto flex items-center">${v.tray}
    <div class="w-[48px] text-white"><div class="flex pb-[3px] pl-[13px]">${t(v.time, 27)}</div>${t('30.04.202', 48)}</div></div>
  </footer>
 </div>
 <div class="mt-px flex h-[15px] items-center"><span class="flex w-[17px] justify-center">${svg(7,8,'0 0 7 8','<path d="M6 .5L2 4l4 3.500" stroke="#444" stroke-width="2"/>')}</span><i class="h-full w-[864px] bg-[#cdcdcd]"></i><span class="ml-auto pr-1">${svg(7,8,'0 0 7 8','<path d="M1 .5L5 4 1 7.500" stroke="#444" stroke-width="2"/>')}</span></div>
 <div class="mt-auto flex h-[21px] items-center justify-end gap-[3px] pb-px pr-[3px] text-[11px]">${S}${t('Right Control', 63)}<span class="ml-[6px] self-end pb-[2px]">${svg(9,9,'0 0 9 9','<path d="M6 0h2v2H6zM3 3h2v2H3zM6 3h2v2H6zM0 6h2v2H0zM3 6h2v2H3zM6 6h2v2H6z" fill="#bdbdbd"/>')}</span></div>
</div>`;

const base = `<div class="flex w-[48px] justify-center">${I.win}</div><div class="flex w-[48px] justify-center">${I.search}</div>`;
const client = { title:'Windows client macek Matouš [Beží] - Oracle VM VirtualBox', tw:316, time:'21:43',
  ip:['192','168','0','5'], gw:['192','168','1','0'], dns:['192','168','1','1'],
  icons: sc(D.bin,['Koš',19]) + sc(D.tb,['Mozilla',37],['Thunderbird',62]) + sc(D.ff,['Firefox',34]) + sc(D.docs,['Total',26]),
  bar: base + `<div class="flex w-[50px] justify-center">${I.tv}</div>` + cell(I.edge) + uc(I.folder) + cell(I.store) + cell(I.mail) + act,
  tray: `${I.people}<span class="w-[22px]"></span>${I.caret}<span class="w-[9px]"></span>${I.ethw}<span class="w-[7px]"></span>${I.vol}<span class="w-[8px]"></span>` };
const serverVm = { r:1, title:'Windows server macek Matouš [Beží] - Oracle VM VirtualBox', tw:319, time:'22:42',
  ip:['192','168','0','10'], gw:E, dns:['127','0','0','1'],
  icons: sc(D.binFull,['Koš',19]) + sc(D.kerio,['Kerio-MailS...',70]) + sc(D.exe,['CesarFTP.EXE',70]) + sc(D.fold,['Filezilla',38]) + sc(D.ftp,['CesarFTP',48]),
  bar: base + `<div class="flex w-[50px] justify-center">${I.tv2}</div>` + uc(I.ie) + cell(I.folder) + cell(I.server) + cell(I.books) + cell(I.scroll) + uc(I.xampp) + act,
  tray: `${I.caret}<span class="w-[9px]"></span>${I.ethw}<span class="w-[7px]"></span>${I.volx}<span class="w-[8px]"></span>` };

document.getElementById('root').innerHTML = `
<div class="flex h-[1038px] gap-[2px] bg-[#454545]">${vm(client)}${vm(serverVm)}</div>
<footer class="flex h-[41px] items-center border-t border-[#353535] bg-[linear-gradient(90deg,#1f1f1f,#1f1f1f_28%,#211c1c_38%,#241c1b_50%,#201e1d_61%,#2b1b1b_68%,#271d1c_80%,#1f1f20_92%)] text-white">
 <div class="flex w-[47px] justify-center">${I.win}</div><div class="flex w-[50px] justify-center">${I.tv}</div>
 ${cell(I.paint)}${cell(I.gear)}${cell(I.spk)}${cell(I.blue)}${uc(I.discord)}${cell(I.mouse)}${cell(I.folder2)}${cell(I.ts)}${cell(I.vlc)}${cell(I.cp)}${cell(I.calc)}${uc(I.chrome)}${uc(I.word)}${uc(I.hyper)}${uc(I.vbox)}${uc(I.vmBig)}
 <div class="ml-auto flex h-full items-center">${I.people}<span class="w-[22px]"></span>${I.caret}<span class="w-[9px]"></span>${I.eth}<span class="w-2"></span>${I.vol}<span class="w-[7px]"></span>${I.printer}<span class="w-[11px]"></span>${t('CES', 20)}
  <div class="ml-[13px] flex w-[56px] flex-col items-center gap-[3px]">${t('9:05', 21)}${t('21.10.2020', 54)}</div><span class="ml-[17px]">${I.notif}</span><i class="ml-[19px] mr-1 h-full w-px bg-[#777]"></i></div>
</footer>`;

// Fit every measured label to its nominal width.
function fit() {
  const all = [...document.querySelectorAll('[data-w]')];
  all.forEach(e => { e.style.letterSpacing = '0px'; });
  const ws = all.map(e => e.getBoundingClientRect().width);
  all.forEach((e, i) => { e.style.letterSpacing = ((+e.dataset.w - ws[i]) / [...e.textContent].length).toFixed(3) + 'px'; });
}
fit();
document.fonts.ready.then(fit);
addEventListener('load', () => { fit(); requestAnimationFrame(fit); setTimeout(fit, 60); });
</script>
</body>
</html>
